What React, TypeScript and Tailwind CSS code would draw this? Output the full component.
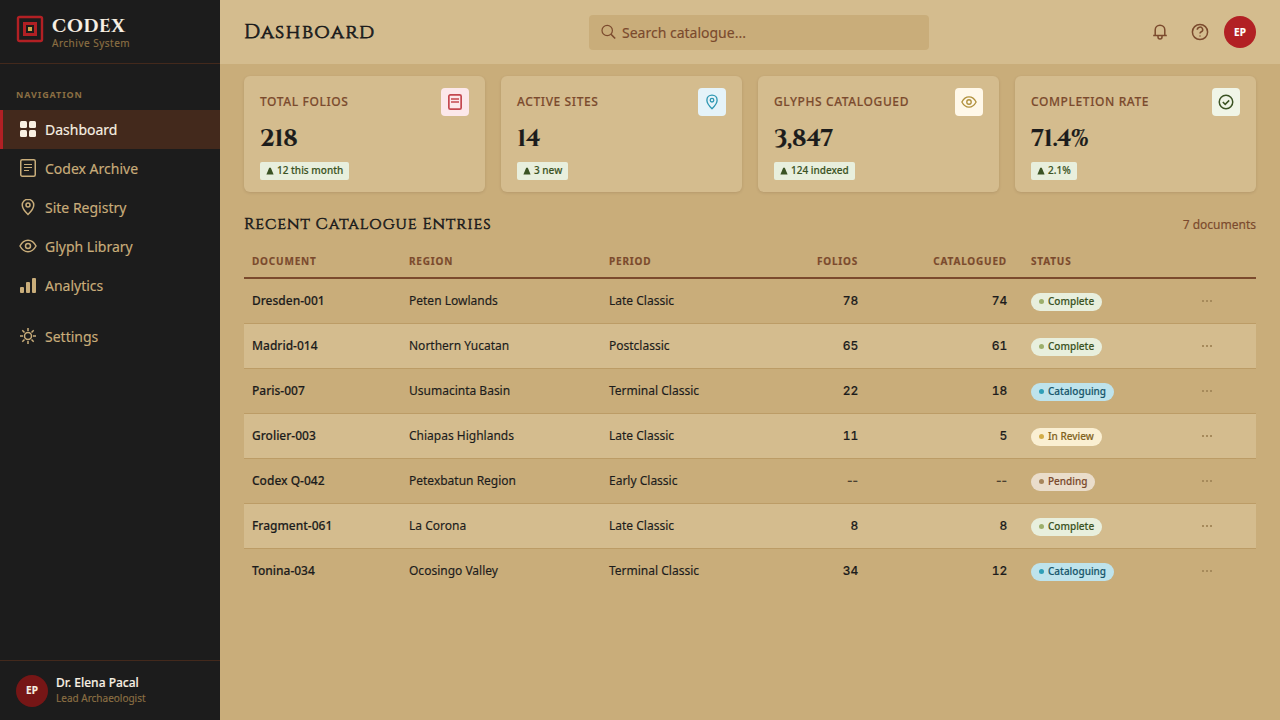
import React from 'react';

type IconProps = { className?: string };

const svgProps = {
  viewBox: '0 0 18 18',
  fill: 'none',
  stroke: 'currentColor',
  strokeWidth: 1.5,
};

const GridIcon = ({ className }: IconProps) => (
  <svg viewBox="0 0 18 18" className={className} fill="currentColor">
    <rect x="1" y="1" width="7" height="7" rx="1.5" />
    <rect x="10" y="1" width="7" height="7" rx="1.5" />
    <rect x="1" y="10" width="7" height="7" rx="1.5" />
    <rect x="10" y="10" width="7" height="7" rx="1.5" />
  </svg>
);
const CodexIcon = ({ className }: IconProps) => (
  <svg {...svgProps} className={className}>
    <rect x="1.75" y="0.75" width="14.5" height="16.5" rx="1.5" />
    <path d="M5 5.5h8M5 8.5h8M5 11.5h5" strokeWidth="1.2" />
  </svg>
);
const PinIcon = ({ className }: IconProps) => (
  <svg {...svgProps} className={className}>
    <path d="M9 1.25c-3.3 0-5.75 2.5-5.75 5.75C3.25 11 9 16.5 9 16.5S14.75 11 14.75 7C14.75 3.75 12.3 1.25 9 1.25z" />
    <circle cx="9" cy="7" r="2" />
  </svg>
);
const EyeIcon = ({ className }: IconProps) => (
  <svg {...svgProps} className={className}>
    <path d="M1 9s3-5.75 8-5.75S17 9 17 9s-3 5.75-8 5.75S1 9 1 9z" />
    <circle cx="9" cy="9" r="2.5" />
  </svg>
);
const BarsIcon = ({ className }: IconProps) => (
  <svg viewBox="0 0 18 18" className={className} fill="currentColor">
    <rect x="1" y="11" width="4" height="6" rx="1" />
    <rect x="7" y="6" width="4" height="11" rx="1" />
    <rect x="13" y="2" width="4" height="15" rx="1" />
  </svg>
);
const SunIcon = ({ className }: IconProps) => (
  <svg {...svgProps} className={className}>
    <circle cx="9" cy="9" r="3.5" />
    <path d="M9 1v3M9 14v3M1 9h3M14 9h3M3.3 3.3l2.2 2.2M12.5 12.5l2.2 2.2M3.3 14.7l2.2-2.2M12.5 5.5l2.2-2.2" />
  </svg>
);
const FolioIcon = ({ className }: IconProps) => (
  <svg viewBox="0 0 16 16" fill="none" stroke="currentColor" strokeWidth="1.7" className={className}>
    <rect x="1.85" y="0.85" width="12.3" height="14.3" rx="1.5" />
    <path d="M4 5h8M4 8h8" />
  </svg>
);
const CheckIcon = ({ className }: IconProps) => (
  <svg viewBox="0 0 16 16" fill="none" stroke="currentColor" strokeWidth="1.5" className={className}>
    <circle cx="8" cy="8" r="6.75" />
    <path d="M4.8 8l2.4 2.4 4-4" />
  </svg>
);

const nav = [
  { label: 'Dashboard', icon: GridIcon, active: true },
  { label: 'Codex Archive', icon: CodexIcon },
  { label: 'Site Registry', icon: PinIcon },
  { label: 'Glyph Library', icon: EyeIcon },
  { label: 'Analytics', icon: BarsIcon },
];

const stats = [
  { label: 'TOTAL FOLIOS', value: '218', delta: '12 this month', icon: FolioIcon, tint: 'bg-[#fce8ea] text-[#c4484f]' },
  { label: 'ACTIVE SITES', value: '14', delta: '3 new', icon: PinIcon, tint: 'bg-[#e5f3f9] text-[#2e97b2]' },
  { label: 'GLYPHS CATALOGUED', value: '3,847', delta: '124 indexed', icon: EyeIcon, tint: 'bg-[#fff8e9] text-[#b0903c]' },
  { label: 'COMPLETION RATE', value: '71.4%', delta: '2.1%', icon: CheckIcon, tint: 'bg-[#f0f5e7] text-[#3b5323]' },
];

const statusStyle: Record<string, { pill: string; dot: string }> = {
  Complete: { pill: 'bg-[#e8efdd] text-[#3b5323]', dot: 'bg-[#9caf6b]' },
  Cataloguing: { pill: 'bg-[#bee3ec] text-[#17566b]', dot: 'bg-[#2f9fb8]' },
  'In Review': { pill: 'bg-[#faefd2] text-[#82641f]', dot: 'bg-[#d2ac47]' },
  Pending: { pill: 'bg-[#eaddcb] text-[#7b4a2d]', dot: 'bg-[#a6855b]' },
};

const rows = [
  ['Dresden-001', 'Peten Lowlands', 'Late Classic', '78', '74', 'Complete'],
  ['Madrid-014', 'Northern Yucatan', 'Postclassic', '65', '61', 'Complete'],
  ['Paris-007', 'Usumacinta Basin', 'Terminal Classic', '22', '18', 'Cataloguing'],
  ['Grolier-003', 'Chiapas Highlands', 'Late Classic', '11', '5', 'In Review'],
  ['Codex Q-042', 'Petexbatun Region', 'Early Classic', '--', '--', 'Pending'],
  ['Fragment-061', 'La Corona', 'Late Classic', '8', '8', 'Complete'],
  ['Tonina-034', 'Ocosingo Valley', 'Terminal Classic', '34', '12', 'Cataloguing'],
];

const columns = 'grid grid-cols-[157px_200px_149px_116px_149px_170px_71px]';

function Count({ value }: { value: string }) {
  const empty = value === '--';
  return (
    <span className={`pr-2 text-right font-[Inter,sans-serif] font-medium ${empty ? 'text-[#4a4030]' : 'tracking-[-0.2px] tabular-nums'}`}>
      {value}
    </span>
  );
}

function Sidebar() {
  return (
    <aside className="flex w-[220px] shrink-0 flex-col bg-[#1c1c1c]">
      <div className="flex h-16 items-center gap-2 border-b border-[#43291c] px-4">
        <svg viewBox="0 0 28 28" className="mb-1.5 size-7" fill="none">
          <rect x="2" y="2" width="24" height="24" rx="1.5" stroke="#b22024" strokeWidth="2.4" />
          <rect x="7" y="7" width="14" height="14" fill="#b22024" />
          <rect x="10" y="10" width="8" height="8" fill="#1c1c1c" />
          <rect x="12" y="12" width="4" height="4" fill="#cda74e" />
        </svg>
        <div className="pb-0.5">
          <div className="pt-[3px] font-[Cinzel,'Liberation_Serif',serif] text-[18px] leading-[21px] font-bold tracking-[1px] text-[#f8f0e3]">CODEX</div>
          <div className="text-[10px] leading-3 tracking-[0.5px] text-[#8b6f43]">Archive System</div>
        </div>
      </div>
      <div className="px-4 pt-6 pb-[9px] text-[9px] leading-[13px] font-bold tracking-[0.9px] text-[#8b6f43] [-webkit-text-stroke:0]">NAVIGATION</div>
      <nav className="flex flex-col">
        {nav.map(({ label, icon: Icon, active }) => (
          <a
            key={label}
            className={`flex h-[39px] items-center gap-2 border-l-[3px] pl-4 text-[14px] ${
              active ? 'border-[#b22024] bg-[#43291c] text-[#f8f0e3]' : 'border-transparent text-[#c9ad7a]'
            }`}
          >
            <Icon className="mb-0.5 size-[18px]" />
            {label}
          </a>
        ))}
        <a className="mt-3 flex h-[39px] items-center gap-2 border-l-[3px] border-transparent pl-4 text-[14px] text-[#c9ad7a]">
          <SunIcon className="mb-0.5 size-[18px]" />
          Settings
        </a>
      </nav>
      <div className="mt-auto flex h-[60px] items-center gap-2 border-t border-[#43291c] px-4">
        <div className="flex size-8 items-center justify-center rounded-full bg-[#761616] text-[10px] font-bold text-[#f8f0e3]">EP</div>
        <div className="pb-px">
          <div className="pt-px text-[12px] leading-4 font-medium text-[#f8f0e3]">Dr. Elena Pacal</div>
          <div className="text-[10px] leading-[15px] text-[#8b6f43]">Lead Archaeologist</div>
        </div>
      </div>
    </aside>
  );
}

function Header() {
  return (
    <header className="flex h-16 items-center justify-between bg-[#d4bc8e] px-6">
      <h1 className="w-[345px] font-[Cinzel,'Liberation_Serif',serif] text-[20px] font-medium tracking-[1.2px] [-webkit-text-stroke:0.75px]">Dashboard</h1>
      <div className="flex h-[35px] w-[340px] items-center gap-[5px] rounded bg-[#c9ad7a] px-3 text-[14px] text-[#7b4a2d]">
        <svg viewBox="0 0 16 16" className="size-4" fill="none" stroke="currentColor" strokeWidth="1.2">
          <circle cx="6.2" cy="6.5" r="5.2" />
          <path d="M10 10.3l4.2 4.2" strokeWidth="1.6" />
        </svg>
        Search catalogue...
      </div>
      <div className="flex w-[327px] items-center justify-end gap-2 text-[#7b4a2d]">
        <div className="flex size-8 items-center justify-center">
          <svg viewBox="0 0 18 18" className="size-[18px]" fill="none" stroke="currentColor" strokeWidth="1.5">
            <path d="M2.2 12.5h13.6M4.2 12.3V7a4.8 4.8 0 0 1 9.6 0v5.3" />
            <path d="M7 13v1a2 2 0 0 0 4 0v-1" />
          </svg>
        </div>
        <div className="flex size-8 items-center justify-center">
          <svg viewBox="0 0 18 18" className="size-[18px]" fill="none" stroke="currentColor" strokeWidth="1.5">
            <circle cx="9" cy="9" r="7.6" />
            <path d="M6.3 6.8a2.7 2.5 0 1 1 4 2c-.9.4-1.3.8-1.3 1.7" />
            <path d="M9 12.6v1" />
          </svg>
        </div>
        <div className="flex size-8 items-center justify-center rounded-full bg-[#b22024] text-[10px] font-bold text-white">EP</div>
      </div>
    </header>
  );
}

export default function App() {
  return (
    <div className="flex h-[720px] w-[1280px] overflow-hidden bg-[#c9ad7a] font-['Noto_Sans',sans-serif] text-[#1c1c1c] [-webkit-text-stroke:0.15px]">
      <Sidebar />
      <main className="flex-1">
        <Header />
        <div className="px-6 pt-3">
          <section className="grid grid-cols-4 gap-4">
            {stats.map(({ label, value, delta, icon: Icon, tint }) => (
              <article key={label} className="h-[116px] rounded-md bg-[#d4bc8e] px-4 pt-3 shadow-[0_1px_3px_rgba(66,41,28,0.15)]">
                <div className="flex h-7 items-center justify-between">
                  <span className="text-[12px] font-medium tracking-[0.6px] text-[#7b4a2d]">{label}</span>
                  <span className={`flex size-7 items-center justify-center rounded ${tint}`}>
                    <Icon className="size-4" />
                  </span>
                </div>
                <div className="mt-[7px] font-[Cinzel,'Liberation_Serif',serif] text-[24px] leading-8 font-bold tracking-[-0.48px]">{value}</div>
                <div className="mt-[7px] flex h-[18px] w-fit items-center gap-[3px] rounded-xs bg-[#e8efdd] px-1.5 pb-px text-[10px] font-medium text-[#3b5323]">
                  <svg viewBox="0 0 8 8" className="size-2" fill="currentColor">
                    <path d="M3.2 0.8h1.6L7.6 7.4H.4z" />
                  </svg>
                  {delta}
                </div>
              </article>
            ))}
          </section>
          <div className="mt-5 flex h-6 items-center justify-between">
            <h2 className="font-[Cinzel,'Liberation_Serif',serif] text-[16px] font-medium tracking-[0.97px] [-webkit-text-stroke:0.6px]">Recent Catalogue Entries</h2>
            <span className="pt-0.5 text-[12px] text-[#7b4a2d]">7 documents</span>
          </div>
          <div className={`${columns} mt-2 h-[35px] items-center border-b-2 border-[#7b4a2d] pt-0.5 text-[10px] font-bold tracking-[0.8px] text-[#7b4a2d]`}>
            <span className="pl-2">DOCUMENT</span>
            <span className="pl-2">REGION</span>
            <span className="pl-2">PERIOD</span>
            <span className="pr-2 text-right">FOLIOS</span>
            <span className="pr-2 text-right">CATALOGUED</span>
            <span className="pl-4">STATUS</span>
          </div>
          {rows.map(([doc, region, period, folios, done, status], i) => (
            <div
              key={doc}
              className={`${columns} h-[45px] items-center border-b text-[12px] ${i < 6 ? 'border-[#bc9c66]' : 'border-transparent'} ${i % 2 ? 'bg-[#d4bc8e]' : ''}`}
            >
              <span className="pl-2 font-medium">{doc}</span>
              <span className="pl-2">{region}</span>
              <span className="pl-2">{period}</span>
              <Count value={folios} />
              <Count value={done} />
              <span className="pt-0.5 pl-4">
                <span className={`flex h-[18px] w-fit items-center gap-1 rounded-full px-2 pb-px text-[10px] font-medium ${statusStyle[status].pill}`}>
                  <i className={`size-[5px] rounded-full ${statusStyle[status].dot}`} />
                  {status}
                </span>
              </span>
              <span className="flex gap-0.5 pl-[17px] text-[#a68a5b]">
                <i className="size-0.5 bg-current" />
                <i className="size-0.5 bg-current" />
                <i className="size-0.5 bg-current" />
              </span>
            </div>
          ))}
        </div>
      </main>
    </div>
  );
}
